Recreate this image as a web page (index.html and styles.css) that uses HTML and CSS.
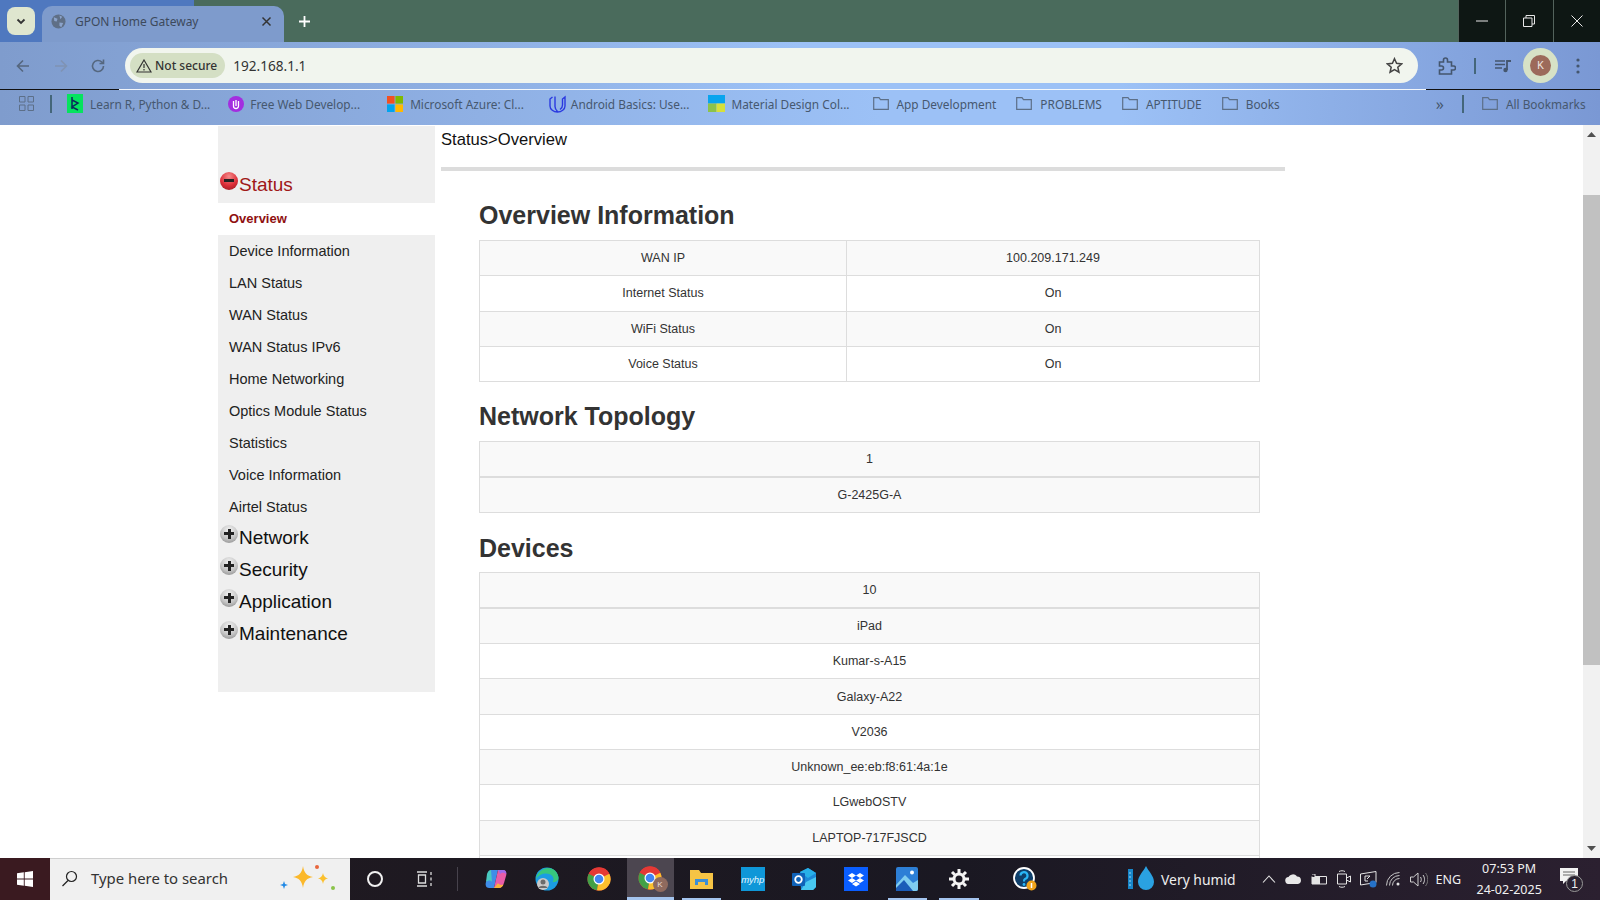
FILE: index.html
```html
<!DOCTYPE html>
<html lang="en">
<head>
  <meta charset="UTF-8">
  <title>GPON Home Gateway</title>
  <link rel="stylesheet" href="styles.css">
</head>
<body>
  <div class="tabstrip">
    <div class="tab-left">
      <button class="tab-search"><svg width="12" height="12" viewBox="0 0 12 12"><path d="M2.5 4.5 6 8l3.5-3.5" fill="none" stroke="#333" stroke-width="1.8"/></svg></button>
      <div class="tab">
        <svg class="tab-globe" width="15" height="15" viewBox="0 0 16 16"><circle cx="8" cy="8" r="7.5" fill="#5f6f86"/><path d="M3 3.5 7 5 6 8 3.5 7.5zM9 9l4 .5-2 4.5-2-1.500zM9 1.500l3 1.500-2 2.500z" fill="#8ba3cb"/></svg>
        <span class="tab-title">GPON Home Gateway</span>
        <svg class="tab-close" width="11" height="11" viewBox="0 0 11 11"><path d="M1.5 1.5l8 8M9.5 1.5l-8 8" stroke="#333" stroke-width="1.5"/></svg>
      </div>
    </div>
    <svg class="new-tab" width="13" height="13" viewBox="0 0 13 13"><path d="M6.5 1v11M1 6.5h11" stroke="#fff" stroke-width="1.8"/></svg>
    <div class="win-controls">
      <div class="win-btn"><svg width="12" height="12" viewBox="0 0 12 12"><path d="M0 6h12" stroke="#e8e8e8" stroke-width="1"/></svg></div>
      <div class="win-btn"><svg width="12" height="12" viewBox="0 0 12 12"><path d="M.5 3h8.500v8.500H.5zM3 3V.5h8.500V9H9" fill="none" stroke="#e8e8e8"/></svg></div>
      <div class="win-btn"><svg width="12" height="12" viewBox="0 0 12 12"><path d="M.5.500l11 11M11.500.500l-11 11" stroke="#e8e8e8"/></svg></div>
    </div>
  </div>

  <div class="toolbar">
    <svg class="nav-icon" width="16" height="16" viewBox="0 0 16 16"><path d="M14 8H2.500M8 2.500 2.500 8 8 13.500" fill="none" stroke="#55677f" stroke-width="1.6"/></svg>
    <svg class="nav-icon" width="16" height="16" viewBox="0 0 16 16"><path d="M2 8h11.500M8 2.500 13.500 8 8 13.500" fill="none" stroke="#7f93b3" stroke-width="1.6"/></svg>
    <svg class="nav-icon nav-reload" width="16" height="16" viewBox="0 0 16 16"><path d="M13.500 8A5.500 5.500 0 1 1 11.800 4L13.500 5.500M13.500 1.500v4h-4" fill="none" stroke="#55677f" stroke-width="1.6"/></svg>
    <div class="omnibox">
      <div class="not-secure">
        <svg width="16" height="14" viewBox="0 0 16 14"><path d="M8 1 15 13H1zM8 5v4M8 10v1.500" fill="none" stroke="#333" stroke-width="1.2"/></svg>
        <span>Not secure</span>
      </div>
      <span class="url">192.168.1.1</span>
      <svg class="star" width="17" height="17" viewBox="0 0 18 18"><path d="M9 1.800l2.200 4.900 5.300.6-4 3.500 1.200 5.200L9 13.300 4.300 16l1.200-5.200-4-3.500 5.300-.6z" fill="none" stroke="#444" stroke-width="1.6"/></svg>
    </div>
    <svg class="tool-icon puzzle" width="18" height="18" viewBox="0 0 18 18"><path d="M1.500 5h4V3a2 2 0 0 1 4 0v2h4v4h2a2 2 0 0 1 0 4h-2v4H1.500v-4h2a2 2 0 0 0 0-4h-2z" fill="none" stroke="#44566e" stroke-width="1.6"/></svg>
    <span class="tool-sep"></span>
    <svg class="tool-icon media" width="17" height="14" viewBox="0 0 17 14"><path d="M0 2h10M0 5.500h10M0 9h7" stroke="#44566e" stroke-width="1.6"/><path d="M12 11V2h4" fill="none" stroke="#44566e" stroke-width="1.8"/><circle cx="10.500" cy="11" r="2.200" fill="#44566e"/></svg>
    <div class="avatar-ring"><span class="avatar">K</span></div>
    <svg class="tool-icon dots" width="4" height="16" viewBox="0 0 4 16"><circle cx="2" cy="2" r="1.600" fill="#44566e"/><circle cx="2" cy="8" r="1.600" fill="#44566e"/><circle cx="2" cy="14" r="1.600" fill="#44566e"/></svg>
  </div>

  <div class="bookmarks">
    <div class="bm-rule"></div>
    <svg class="apps" width="15" height="15" viewBox="0 0 15 15"><path d="M.5.500h5.500v5.500H.5zM9 .5h5.500v5.500H9zM.5 9h5.500v5.500H.5zM9 9h5.500v5.500H9z" fill="none" stroke="#5c6f88"/></svg>
    <span class="bm-sep"></span>
    <a class="bm bm-datacamp"><svg width="16" height="19" viewBox="0 0 16 19"><rect width="16" height="19" fill="#05e35f"/><path d="M5 3v12M5 6l6 3-6 4 6 3" fill="none" stroke="#0a2a5c" stroke-width="1.5"/></svg>Learn R, Python &amp; D...</a>
    <a class="bm bm-free"><svg width="16" height="16" viewBox="0 0 16 16"><circle cx="8" cy="8" r="8" fill="#a32ee0"/><path d="M5.500 5v5a2.500 2.500 0 0 0 5 0V5M8 4v6" fill="none" stroke="#fff" stroke-width="1.3"/></svg>Free Web Develop...</a>
    <a class="bm bm-ms"><svg width="16" height="16" viewBox="0 0 16 16"><rect width="7.600" height="7.600" fill="#f25022"/><rect x="8.400" width="7.600" height="7.600" fill="#7fba00"/><rect y="8.400" width="7.600" height="7.600" fill="#00a4ef"/><rect x="8.400" y="8.400" width="7.600" height="7.600" fill="#ffb900"/></svg>Microsoft Azure: Cl...</a>
    <a class="bm bm-udacity"><svg width="17" height="18" viewBox="0 0 17 18"><path d="M3.500 2 1 4v7c0 3.500 3.500 6 7.500 6s7.500-2.500 7.500-6V2l-2.500 2v6c0 2-1 3.500-2.500 4.500M6 1.500v10c0 2 1 3.500 2.500 5" fill="none" stroke="#2a39e0" stroke-width="1.4"/></svg>Android Basics: Use...</a>
    <a class="bm bm-material"><svg width="17" height="17" viewBox="0 0 17 17"><rect width="17" height="8.500" fill="#08a4ee"/><rect y="8.500" width="8.500" height="8.500" fill="#8cc34a"/><rect x="8.500" y="8.500" width="8.500" height="8.500" fill="#d7e03a"/></svg>Material Design Col...</a>
    <a class="bm bm-folder"><svg class="folder" width="16" height="13" viewBox="0 0 16 13"><path d="M.7.700h5.300l1.500 2h7.800v9.600H.7z" fill="none" stroke="#5c6f88" stroke-width="1.2"/></svg>App Development</a>
    <a class="bm bm-folder"><svg class="folder" width="16" height="13" viewBox="0 0 16 13"><path d="M.7.700h5.300l1.500 2h7.800v9.600H.7z" fill="none" stroke="#5c6f88" stroke-width="1.2"/></svg>PROBLEMS</a>
    <a class="bm bm-folder"><svg class="folder" width="16" height="13" viewBox="0 0 16 13"><path d="M.7.700h5.300l1.500 2h7.800v9.600H.7z" fill="none" stroke="#5c6f88" stroke-width="1.2"/></svg>APTITUDE</a>
    <a class="bm bm-folder"><svg class="folder" width="16" height="13" viewBox="0 0 16 13"><path d="M.7.700h5.300l1.500 2h7.800v9.600H.7z" fill="none" stroke="#5c6f88" stroke-width="1.2"/></svg>Books</a>
    <span class="bm-more">&raquo;</span>
    <span class="bm-sep bm-sep-right"></span>
    <a class="bm bm-all"><svg class="folder" width="16" height="13" viewBox="0 0 16 13"><path d="M.7.700h5.300l1.500 2h7.800v9.600H.7z" fill="none" stroke="#5c6f88" stroke-width="1.2"/></svg>All Bookmarks</a>
  </div>

  <div class="page">
    <div class="page-inner">
      <aside class="sidebar">
        <div class="menu-head active">
          <span class="ball ball-red"></span><span class="menu-label">Status</span>
        </div>
        <a class="menu-item selected">Overview</a>
        <a class="menu-item">Device Information</a>
        <a class="menu-item">LAN Status</a>
        <a class="menu-item">WAN Status</a>
        <a class="menu-item">WAN Status IPv6</a>
        <a class="menu-item">Home Networking</a>
        <a class="menu-item">Optics Module Status</a>
        <a class="menu-item">Statistics</a>
        <a class="menu-item">Voice Information</a>
        <a class="menu-item">Airtel Status</a>
        <div class="menu-head"><span class="ball"></span><span class="menu-label">Network</span></div>
        <div class="menu-head"><span class="ball"></span><span class="menu-label">Security</span></div>
        <div class="menu-head"><span class="ball"></span><span class="menu-label">Application</span></div>
        <div class="menu-head"><span class="ball"></span><span class="menu-label">Maintenance</span></div>
      </aside>
      <main class="main">
        <div class="breadcrumb">Status&gt;Overview</div>
        <div class="content">
          <h2>Overview Information</h2>
          <table class="info">
            <tr class="odd"><td class="c1">WAN IP</td><td>100.209.171.249</td></tr>
            <tr><td class="c1">Internet Status</td><td>On</td></tr>
            <tr class="odd"><td class="c1">WiFi Status</td><td>On</td></tr>
            <tr><td class="c1">Voice Status</td><td>On</td></tr>
          </table>
          <h2>Network Topology</h2>
          <table class="info">
            <tr class="odd head"><td>1</td></tr>
            <tr class="odd"><td>G-2425G-A</td></tr>
          </table>
          <h2 class="devices-title">Devices</h2>
          <table class="info device-list">
            <tr class="odd head"><td>10</td></tr>
            <tr class="odd"><td>iPad</td></tr>
            <tr><td>Kumar-s-A15</td></tr>
            <tr class="odd"><td>Galaxy-A22</td></tr>
            <tr><td>V2036</td></tr>
            <tr class="odd"><td>Unknown_ee:eb:f8:61:4a:1e</td></tr>
            <tr><td>LGwebOSTV</td></tr>
            <tr class="odd"><td>LAPTOP-717FJSCD</td></tr>
            <tr><td>&nbsp;</td></tr>
          </table>
        </div>
      </main>
    </div>
    <div class="scrollbar">
      <svg class="arrow" width="9" height="5" viewBox="0 0 9 5"><path d="M4.500 0 9 5H0z" fill="#505050"/></svg>
      <div class="thumb-track"><div class="thumb"></div></div>
      <svg class="arrow" width="9" height="5" viewBox="0 0 9 5"><path d="M4.500 5 9 0H0z" fill="#505050"/></svg>
    </div>
  </div>

  <div class="taskbar">
    <div class="start"><svg width="16" height="16" viewBox="0 0 16 16"><path d="M0 2.300 6.800 1.300v6.300H0zM7.700 1.200 16 0v7.600H7.700zM0 8.400h6.800v6.300L0 13.700zM7.700 8.400H16V16l-8.300-1.200z" fill="#fff"/></svg></div>
    <div class="search">
      <svg width="17" height="17" viewBox="0 0 17 17"><circle cx="10.500" cy="6.500" r="5" fill="none" stroke="#222" stroke-width="1.2"/><path d="M7 10.500 1.500 16" stroke="#222" stroke-width="1.3"/></svg>
      <span>Type here to search</span>
      <svg class="sparkle" width="62" height="30" viewBox="0 0 60 30"><path d="M25 3c1 7 4 10 10 11-6 1-9 4-10 11-1-7-4-10-10-11 6-1 9-4 10-11z" fill="#fbb82b"/><path d="M45 10c.5 3 2 4.500 5 5.500-3 .5-4.500 2-5 5.500-.5-3.500-2-5-5-5.500 3-1 4.500-2.500 5-5.500z" fill="#fbc02d"/><path d="M6 18l1 3 3 1-3 1-1 3-1-3-3-1 3-1z" fill="#1e88e5"/><circle cx="39" cy="4" r="2" fill="#e8663c"/><circle cx="55" cy="25" r="2" fill="#8bc34a"/></svg>
    </div>
    <div class="task-btn task-wide"><svg width="20" height="20" viewBox="0 0 20 20"><circle cx="10" cy="10" r="7" fill="none" stroke="#f0f0f0" stroke-width="2"/></svg></div>
    <div class="task-btn task-wide"><svg width="18" height="16" viewBox="0 0 18 16"><path d="M1 1h10M1 15h10M2.500 4h7v8h-7zM15 1v3M15 6.500v3M15 12v3" fill="none" stroke="#dcdcdc" stroke-width="1.3"/></svg></div>
    <span class="task-sep"></span>
    <div class="task-btn"><svg width="24" height="24" viewBox="0 0 24 24"><path d="M7 3h7L10 21H5C2 21 1 18 2 15z" fill="#3f8de8"/><path d="M7 3c-2 0-3 1.500-4 4L2 15c2-2 5-2 6 0z" fill="#49c9c0"/><path d="M14 3h5c3 0 4 3 3 6l-2 7c-1 3-3 5-5 5h-5z" fill="#e85ca8"/><path d="M14 3h5c2.500 0 3.500 2 3.200 4-2-2-5-1.500-6 0z" fill="#9a6bea"/><path d="M10 21h5c2 0 3.500-1.500 4.500-3.500-2.500 1-5 0-5.500-1.500z" fill="#f8b23c"/></svg></div>
    <div class="task-btn"><svg width="24" height="24" viewBox="0 0 24 24"><circle cx="12" cy="12" r="11.500" fill="#1b9de2"/><path d="M1 12C2 5 8 1 13 1c5.500 0 10 4 10.500 10 0 3-3 4.500-6 4 2-2 1-6-2-7.500C10 5 4 7 1 12z" fill="#37c77e"/><circle cx="8" cy="17" r="6" fill="#c9c9c9"/><circle cx="8" cy="15" r="2.500" fill="#6b6b6b"/><path d="M3.500 21c1-3 8-3 9 0" fill="#6b6b6b"/></svg></div>
    <div class="task-btn"><svg width="24" height="24" viewBox="0 0 24 24"><use href="#chrome-logo"/></svg></div>
    <div class="task-btn task-active">
      <svg width="24" height="24" viewBox="0 0 24 24"><use href="#chrome-logo"/></svg>
      <span class="profile-badge">K</span>
    </div>
    <div class="task-btn task-open"><svg width="23" height="20" viewBox="0 0 23 20"><path d="M0 1h9l2 3h12v16H0z" fill="#f6c445"/><path d="M5 10h13v6H5z" fill="#3c8ed6"/><path d="M8 13h7v7H8z" fill="#f6c445"/></svg></div>
    <div class="task-btn"><div class="myhp"><i>myhp</i></div></div>
    <div class="task-btn"><svg width="24" height="23" viewBox="0 0 24 23"><path d="M8 4 16 0l8 5v14l-3 3H9z" fill="#1c8ad8"/><path d="M8 4 16 0l8 5-8 5z" fill="#27b0e8"/><path d="M14 14l10-5v10l-3 3H9z" fill="#48c8f0"/><rect y="5" width="13" height="13" rx="1" fill="#0f62b8"/><circle cx="6.500" cy="11.500" r="3.300" fill="none" stroke="#fff" stroke-width="1.8"/></svg></div>
    <div class="task-btn"><svg width="24" height="24" viewBox="0 0 24 24"><rect width="24" height="24" fill="#0a5eff"/><path d="M8 6l4 2.500L8 11 4 8.500zM16 6l4 2.500L16 11l-4-2.500zM8 11l4 2.500L8 16l-4-2.500zM16 11l4 2.500-4 2.500-4-2.500zM12 14.500l4 2.500-4 2.500L8 17z" fill="#fff"/></svg></div>
    <div class="task-btn task-open"><svg width="22" height="24" viewBox="0 0 22 24"><rect width="22" height="24" rx="2" fill="#2d7fd6"/><path d="M0 24V18L9 8l8 8 5-3v9a2 2 0 0 1-2 2z" fill="#7fcdf0"/><path d="M0 24v-3l8-8 9 11z" fill="#1c5db8"/><circle cx="16" cy="5.500" r="2" fill="#fff"/></svg></div>
    <div class="task-btn task-open"><svg width="20" height="20" viewBox="0 0 20 20"><circle cx="10" cy="10" r="5" fill="none" stroke="#f4f4f4" stroke-width="3"/><path d="M10 0v4M10 16v4M0 10h4M16 10h4M3 3l2.800 2.800M14.200 14.200 17 17M3 17l2.800-2.800M14.200 5.800 17 3" stroke="#f4f4f4" stroke-width="3"/></svg></div>
    <div class="task-btn task-help">
      <svg width="24" height="24" viewBox="0 0 24 24"><circle cx="11" cy="11" r="10" fill="#0f3f6a" stroke="#fff" stroke-width="1.8"/><path d="M7.500 8.500A3.500 3.500 0 1 1 12 12c-1 .5-1 1-1 2.500" fill="none" stroke="#29b6f6" stroke-width="2.2"/><circle cx="11" cy="17.500" r="1.400" fill="#29b6f6"/><circle cx="18.500" cy="18.500" r="5" fill="#f0a31a"/><path d="M18.500 16v5" stroke="#fff" stroke-width="1.5"/></svg>
    </div>
    <div class="weather">
      <svg width="27" height="26" viewBox="0 0 27 26"><rect x="0" y="3" width="5" height="20" fill="#1786c9"/><path d="M1 7h2M1 11h2M1 15h2M1 19h2" stroke="#9fd6f2"/><path d="M18 0c3 6 8 10 8 16a8 8 0 0 1-16 0c0-6 5-10 8-16z" fill="#2aa1e2"/></svg>
      <span>Very humid</span>
    </div>
    <div class="tray">
      <svg width="14" height="8" viewBox="0 0 14 8"><path d="M1 7.500 7 1l6 6.500" fill="none" stroke="#e4e4e4" stroke-width="1.1"/></svg>
      <svg width="17" height="10" viewBox="0 0 17 10"><path d="M4 10a3.500 3.500 0 0 1-.5-7A5 5 0 0 1 12 2.500 3.800 3.800 0 0 1 13 10z" fill="#e8e8e8"/></svg>
      <svg width="17" height="11" viewBox="0 0 17 11"><path d="M3.500 2.500h12v7.500H1V2.500" fill="none" stroke="#e4e4e4"/><path d="M1 3h8v7H1z" fill="#e4e4e4"/><path d="M1 0h3v2" fill="none" stroke="#e4e4e4"/></svg>
      <svg width="14" height="18" viewBox="0 0 14 18"><path d="M.5 4h9v10h-9zM9.500 8 13.500 6v6l-4-2M2 1.500c2-1 4-1 6 0M2 16.500c2 1 4 1 6 0" fill="none" stroke="#e4e4e4"/></svg>
      <svg width="17" height="17" viewBox="0 0 17 17"><path d="M.5 3 16 .5v11L.5 14z" fill="none" stroke="#e4e4e4"/><path d="M5 5h5M5 5v5l3 0M10 5 7 8" fill="none" stroke="#e4e4e4"/><circle cx="13" cy="13" r="3.500" fill="#2672c8"/></svg>
      <svg width="15" height="14" viewBox="0 0 15 14"><path d="M.5 13.500A13 13 0 0 1 13.500 .5M3.500 13.500a10 10 0 0 1 10-10M6.500 13.500a7 7 0 0 1 7-7" fill="none" stroke="#c8c8c8"/><circle cx="12" cy="12" r="1.500" fill="#e4e4e4"/></svg>
      <svg width="18" height="15" viewBox="0 0 18 15"><path d="M.5 5h3L8 1v13L3.500 10h-3zM10.500 5c1 1.500 1 3.500 0 5M13 3c2 2.500 2 6.500 0 9" fill="none" stroke="#d0d0d0"/><path d="M15.500 1c3 3.500 3 9.500 0 13" fill="none" stroke="#777"/></svg>
    </div>
    <span class="lang">ENG</span>
    <div class="clock"><span>07:53 PM</span><span>24-02-2025</span></div>
    <div class="notif">
      <svg width="18" height="16" viewBox="0 0 18 16"><path d="M0 0h18v13H6l-3 3v-3H0z" fill="#f2f2f2"/><path d="M3 4h12M3 7h12" stroke="#666"/></svg>
      <span class="notif-count">1</span>
    </div>
  </div>

  <svg class="defs" width="0" height="0">
    <symbol id="chrome-logo" viewBox="0 0 24 24">
      <circle cx="12" cy="12" r="11.500" fill="#e53935"/>
      <path d="M12 12 1.700 6.700A11.500 11.500 0 0 0 10 23.300z" fill="#43a047"/>
      <path d="M12 12 10 23.300A11.500 11.500 0 0 0 22.300 6.700z" fill="#fbc02d"/>
      <path d="M12 6.500h10.300A11.500 11.500 0 0 0 1.700 6.700z" fill="#e53935"/>
      <circle cx="12" cy="12" r="5.500" fill="#fff"/>
      <circle cx="12" cy="12" r="4.300" fill="#4285f4"/>
    </symbol>
  </svg>
</body>
</html>
```

FILE: styles.css
```css
* {
  box-sizing: border-box;
}
html, body {
  margin: 0;
  height: 100%;
  overflow: hidden;
}
body {
  display: flex;
  flex-direction: column;
  width: 1600px;
  height: 900px;
  font-family: 'Liberation Sans', Arial, sans-serif;
  background: #fff;
}
svg {
  flex: none;
}
.defs {
  position: absolute;
}

/* tab strip */
.tabstrip {
  display: flex;
  align-items: center;
  height: 42px;
  background: #4a6b5c;
}
.tab-left {
  display: flex;
  align-items: flex-end;
  flex: none;
  height: 42px;
  width: 194px;
  padding-left: 7px;
  background: #4f78bf;
}
.tab-search {
  flex: none;
  width: 28px;
  height: 28px;
  margin: 0 7px 7px 0;
  padding: 0;
  border: 0;
  border-radius: 8px;
  background: #dfe6cf;
  display: flex;
  align-items: center;
  justify-content: center;
}
.tab {
  display: flex;
  align-items: center;
  flex: none;
  width: 242px;
  height: 36px;
  padding: 0 12px 6px 9px;
  border-radius: 10px 10px 0 0;
  background: #7e9bcc;
}
.tab-title {
  margin-left: 9px;
  flex: 1;
  font-family: 'Noto Sans', sans-serif;
  font-size: 12px;
  color: #3d4a5c;
}
.new-tab {
  margin-left: 104px;
}
.win-controls {
  display: flex;
  margin-left: auto;
  height: 42px;
  background: #0e1714;
}
.win-btn {
  display: flex;
  align-items: center;
  justify-content: center;
  width: 47.5px;
  border-left: 1px solid #53635c;
}

/* toolbar */
.toolbar {
  display: flex;
  align-items: center;
  height: 47px;
  padding-left: 15px;
  background: linear-gradient(90deg, #7f9ccd 0%, #8fb0e4 30%, #9cc1f6 50%, #9cc1f6 70%, #7a98d4 100%);
}
.nav-icon {
  margin-right: 21.5px;
}
.nav-reload {
  margin-right: 19px;
}
.omnibox {
  display: flex;
  align-items: center;
  flex: none;
  width: 1293px;
  height: 35px;
  padding: 0 15px 0 5px;
  border-radius: 18px;
  background: #f1f5ee;
}
.not-secure {
  display: flex;
  align-items: center;
  gap: 3px;
  height: 25px;
  padding: 0 8px 0 6px;
  border-radius: 13px;
  background: #d4dfc4;
  font-family: 'Noto Sans', sans-serif;
  font-size: 12px;
  font-weight: 500;
  color: #333;
}
.url {
  margin-left: 8px;
  font-family: 'Noto Sans', sans-serif;
  font-size: 13.6px;
  color: #333;
}
.star {
  margin-left: auto;
}
.puzzle {
  margin-left: 20px;
}
.tool-sep {
  width: 2px;
  height: 16px;
  margin-left: 18px;
  background: #44667a;
}
.media {
  margin-left: 19px;
}
.avatar-ring {
  display: flex;
  align-items: center;
  justify-content: center;
  width: 35px;
  height: 35px;
  margin-left: 11px;
  border-radius: 50%;
  background: #d7e2c6;
}
.avatar {
  display: flex;
  align-items: center;
  justify-content: center;
  width: 21px;
  height: 21px;
  border-radius: 50%;
  background: #9c6a5a;
  color: #f2e8e4;
  font-size: 10px;
}
.dots {
  margin-left: 18px;
}

/* bookmarks bar */
.bookmarks {
  position: relative;
  display: flex;
  align-items: center;
  height: 36px;
  padding: 0 0 7px 19px;
  background: linear-gradient(90deg, #7f9ccd 0%, #8fb0e4 30%, #9cc1f6 55%, #9cc1f6 70%, #7a98d4 100%);
  font-family: 'Noto Sans', sans-serif;
  font-size: 11.85px;
  color: #46586f;
}
.bm-rule {
  position: absolute;
  top: 0;
  left: 0;
  right: 0;
  height: 1px;
  background: linear-gradient(90deg, #111 0 119px, #f2f6fb 119px 1426px, #111 1426px);
}
.bm-sep {
  flex: none;
  width: 2px;
  height: 18px;
  margin-left: 16px;
  background: #44667a;
}
.bm {
  display: flex;
  align-items: center;
  gap: 6px;
  white-space: nowrap;
}
.bm-datacamp { margin-left: 15px; gap: 7px; }
.bm-free { margin-left: 18px; }
.bm-ms { margin-left: 27px; gap: 7px; }
.bm-udacity { margin-left: 25px; gap: 5px; }
.bm-material { margin-left: 19px; }
.bm-folder { margin-left: 20px; gap: 8px; }
.bm-material + .bm-folder { margin-left: 23px; }
.bm-more {
  margin-left: 156px;
  font-size: 16px;
}
.bm-sep-right {
  margin-left: 18px;
}
.bm-all {
  margin-left: 18px;
  gap: 8px;
}

/* page */
.page {
  display: flex;
  flex: 1;
  min-height: 0;
}
.page-inner {
  display: flex;
  align-items: flex-start;
  flex: 1;
  padding-left: 218px;
  overflow: hidden;
}
.sidebar {
  flex: none;
  display: flex;
  flex-direction: column;
  width: 217px;
  height: 566px;
  margin-top: 1px;
  padding-top: 42px;
  background: #efefef;
}
.menu-head {
  display: flex;
  align-items: flex-start;
  height: 32px;
  padding-left: 2px;
  font-size: 19px;
  color: #111;
}
.menu-head.active {
  height: 35px;
  color: #a01818;
}
.menu-head.active .menu-label {
  line-height: 33px;
}
.menu-head.active .ball {
  margin-top: 4px;
}
.menu-item + .menu-head {
  margin-top: -1px;
}
.menu-label {
  margin-left: 1px;
  line-height: 31px;
}
.ball {
  position: relative;
  width: 18px;
  height: 18px;
  margin-top: 3px;
  border-radius: 50%;
  background: radial-gradient(circle at 50% 30%, #f4f4f4 0, #c4c4c4 55%, #7d7d7d 100%);
}
.ball::before {
  content: '';
  position: absolute;
  left: 4px;
  top: 7px;
  width: 10px;
  height: 3px;
  background: #222;
}
.ball::after {
  content: '';
  position: absolute;
  left: 7.5px;
  top: 3.5px;
  width: 3px;
  height: 10px;
  background: #222;
}
.ball-red {
  background: radial-gradient(circle at 50% 25%, #f58a8a 0, #dc2e38 55%, #8f1820 100%);
}
.ball-red::after {
  display: none;
}
.menu-item {
  display: block;
  height: 32px;
  padding-left: 11px;
  line-height: 32px;
  font-size: 14.5px;
  color: #222;
}
.menu-item.selected {
  background: #fff;
  font-size: 13px;
  font-weight: bold;
  color: #8f1010;
}
.main {
  flex: none;
  width: 844px;
  margin-left: 6px;
}
.breadcrumb {
  height: 46px;
  padding-top: 5px;
  border-bottom: 4px solid #dcdcdc;
  font-size: 16.6px;
  line-height: 20px;
  color: #111;
}
.content {
  width: 781px;
  margin-left: 38px;
}
.content h2 {
  margin: 0;
  padding: 28px 0 9px;
  font-size: 25px;
  line-height: 32px;
  font-weight: bold;
  color: #333;
}
.content table + h2 {
  padding-top: 18px;
  padding-bottom: 9px;
}
.content table + h2.devices-title {
  padding-top: 19px;
  padding-bottom: 8px;
}
.info {
  width: 100%;
  border-collapse: collapse;
  font-size: 12.5px;
  color: #333;
}
.info td {
  height: 35.3px;
  padding: 0;
  border: 1px solid #dddddd;
  text-align: center;
}
.info .c1 {
  width: 367px;
}
.info .odd td {
  background: #f9f9f9;
}
.info .head td {
  border-bottom-width: 2px;
}
.device-list .head td {
  height: 36px;
}
.scrollbar {
  flex: none;
  display: flex;
  flex-direction: column;
  align-items: center;
  justify-content: space-between;
  width: 17px;
  padding: 7px 0;
  background: #f1f1f1;
}
.thumb-track {
  flex: 1;
  width: 100%;
  padding-top: 58px;
}
.thumb {
  height: 470px;
  background: #c1c1c1;
}

/* taskbar */
.taskbar {
  display: flex;
  align-items: center;
  height: 42px;
  background: linear-gradient(90deg, #211a20 0%, #1a1822 60%, #2b2030 100%);
  color: #f0f0f0;
}
.start {
  display: flex;
  align-items: center;
  justify-content: center;
  flex: none;
  width: 50px;
  height: 42px;
  background: #3a1a20;
}
.search {
  display: flex;
  align-items: center;
  flex: none;
  width: 300px;
  height: 42px;
  padding: 0 11px 3px 11px;
  border-top: 1px solid #cfcfcf;
  background: #f0f0f0;
  font-family: 'Noto Sans', sans-serif;
  font-size: 14.9px;
  color: #333;
}
.search span {
  margin-left: 13px;
}
.sparkle {
  margin-left: auto;
}
.task-btn {
  position: relative;
  display: flex;
  align-items: center;
  justify-content: center;
  flex: none;
  width: 51.5px;
  height: 42px;
}
.task-wide {
  width: 50px;
}
.task-sep {
  width: 1px;
  height: 24px;
  margin: 0 12px 0 7px;
  background: #47424c;
}
.task-active {
  width: 47px;
  margin: 0 2px;
  background: #4c4650;
  border-bottom: 3px solid #a4c4ee;
}
.task-open::after {
  content: '';
  position: absolute;
  left: 6px;
  right: 6px;
  bottom: 0;
  height: 2px;
  background: #a4c4ee;
}
.profile-badge {
  position: absolute;
  right: 6px;
  bottom: 5px;
  display: flex;
  align-items: center;
  justify-content: center;
  width: 15px;
  height: 15px;
  border-radius: 50%;
  background: #8f6a5e;
  color: #e8dcd8;
  font-size: 8px;
}
.myhp {
  display: flex;
  align-items: center;
  justify-content: center;
  width: 24px;
  height: 24px;
  background: #0f97d8;
  font-size: 9.5px;
  color: #e6f6ff;
}
.task-help {
  margin-left: 15px;
}
.weather {
  display: flex;
  align-items: center;
  gap: 6px;
  margin-left: 77px;
  font-family: 'Noto Sans', sans-serif;
  font-size: 13.9px;
  color: #eee;
}
.tray {
  display: flex;
  align-items: center;
  gap: 9px;
  margin-left: 26px;
}
.lang {
  margin-left: 8px;
  font-family: 'Noto Sans', sans-serif;
  font-size: 12.5px;
}
.clock {
  display: flex;
  flex-direction: column;
  align-items: center;
  gap: 4px;
  margin-left: 14px;
  width: 68px;
  font-family: 'Noto Sans', sans-serif;
  font-size: 12.5px;
  line-height: 17px;
}
.notif {
  position: relative;
  margin-left: 17px;
  height: 22px;
}
.notif-count {
  position: absolute;
  left: 6px;
  top: 7px;
  display: flex;
  align-items: center;
  justify-content: center;
  width: 17px;
  height: 17px;
  border: 1px solid #999;
  border-radius: 50%;
  background: #2a2230;
  font-size: 12px;
}
```
